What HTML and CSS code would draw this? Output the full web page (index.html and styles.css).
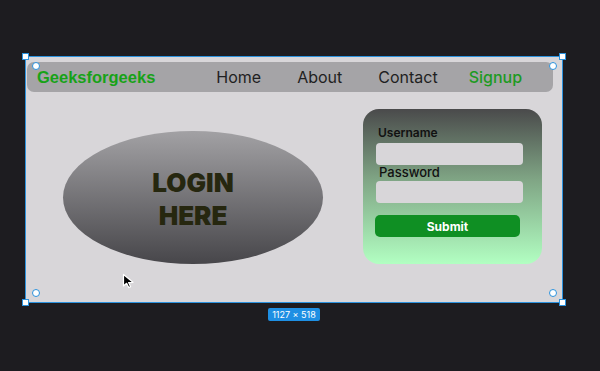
FILE: index.html
```html
<!DOCTYPE html>
<html>
<head>
<meta charset="utf-8">
<link rel="stylesheet" href="styles.css">
</head>
<body>
<div class="stage">
  <div class="frame">
    <nav class="nav">
      <div class="logo">Geeksforgeeks</div>
      <div class="links">
        <a class="link">Home</a>
        <a class="link">About</a>
        <a class="link contact">Contact</a>
        <a class="link signup">Signup</a>
      </div>
    </nav>
    <main class="main">
      <div class="oval">
        <div class="oval-text">LOGIN<br>HERE</div>
      </div>
      <form class="card">
        <label class="lbl lbl-user">Username</label>
        <div class="input"></div>
        <label class="lbl lbl-pass">Password</label>
        <div class="input"></div>
        <div class="submit">Submit</div>
      </form>
    </main>
    <span class="handle sq tl"></span>
    <span class="handle sq tr"></span>
    <span class="handle sq bl"></span>
    <span class="handle sq br"></span>
    <span class="handle ci tl"></span>
    <span class="handle ci tr"></span>
    <span class="handle ci bl"></span>
    <span class="handle ci br"></span>
    <svg class="cursor" width="14" height="16" viewBox="0 0 14 16">
      <path d="M1.5 1.5 L1.5 13 L4.6 10.3 L6.7 14.6 L8.6 13.7 L6.6 9.6 L11 9.3 Z" fill="#000" stroke="#fff" stroke-width="1.2" stroke-linejoin="round"/>
    </svg>
  </div>
  <div class="size-row"><span class="size">1127 × 518</span></div>
</div>
</body>
</html>
```
FILE: styles.css
```css
html, body {
  margin: 0;
  padding: 0;
}
body {
  background: #1d1c20;
  width: 600px;
  height: 371px;
  overflow: hidden;
  font-family: Inter, "Noto Sans", sans-serif;
}
.stage {
  padding-top: 56px;
  padding-left: 25px;
}
.frame {
  position: relative;
  box-sizing: border-box;
  width: 538px;
  height: 247px;
  border: 1px solid #2c92dd;
  background: #d8d6d9;
  padding: 5px 9px 0 1px;
}
.nav {
  height: 30px;
  background: #a5a4a7;
  border-radius: 7px;
  display: flex;
  align-items: center;
  padding-left: 10px;
}
.logo {
  font-family: "Liberation Sans", Arial, sans-serif;
  font-weight: 700;
  font-size: 16.5px;
  color: #17a217;
}
.links {
  display: flex;
  margin-left: 61px;
}
.link {
  font-size: 16px;
  color: #1f1f22;
  margin-right: 36px;
  font-weight: 400;
}
.link.contact {
  margin-right: 31px;
}
.link.signup {
  color: #1d9a22;
  font-weight: 500;
  margin-right: 0;
}
.main {
  display: flex;
  align-items: flex-start;
  padding-left: 36px;
}
.oval {
  margin-top: 39px;
  width: 260px;
  height: 133px;
  border-radius: 50%;
  background: linear-gradient(to bottom, #a2a1a4, #47464a);
  display: flex;
  align-items: center;
  justify-content: center;
}
.oval-text {
  font-size: 26px;
  font-weight: 900;
  line-height: 33px;
  text-align: center;
  color: #26270f;
  margin-top: 2px;
}
.card {
  margin: 17px 0 0 40px;
  box-sizing: border-box;
  width: 179px;
  height: 155px;
  border-radius: 16px;
  background: linear-gradient(to bottom, #4a4a4b 0%, #7fa484 45%, #b2ffc2 100%);
  padding: 16px 19px 0 13px;
  display: flex;
  flex-direction: column;
}
.lbl {
  font-size: 12px;
  color: #111;
  line-height: 15px;
}
.lbl-user {
  font-weight: 600;
  padding-left: 2px;
}
.lbl-pass {
  font-size: 13px;
  font-weight: 500;
  padding-left: 3px;
  line-height: 13px;
  margin-top: 1px;
}
.input {
  height: 22px;
  background: #d8d6d9;
  border-radius: 4px;
  margin-top: 3px;
}
.lbl-pass + .input {
  margin-top: 2px;
}
.submit {
  margin-top: 12px;
  margin-left: -1px;
  margin-right: 3px;
  height: 22px;
  background: #0f8f23;
  border-radius: 5px;
  color: #fff;
  font-size: 12px;
  font-weight: 700;
  display: flex;
  align-items: center;
  justify-content: center;
}
.handle {
  position: absolute;
  box-sizing: border-box;
}
.handle.sq {
  width: 7px;
  height: 7px;
  background: #fff;
  border: 1px solid #2c92dd;
}
.sq.tl { left: -4px; top: -4px; }
.sq.tr { right: -4px; top: -4px; }
.sq.bl { left: -4px; bottom: -4px; }
.sq.br { right: -4px; bottom: -4px; }
.handle.ci {
  width: 8px;
  height: 8px;
  border-radius: 50%;
  background: #fff;
  border: 1.5px solid #2c92dd;
}
.ci.tl { left: 6px; top: 5px; }
.ci.tr { right: 5px; top: 5px; }
.ci.bl { left: 6px; bottom: 5px; }
.ci.br { right: 5px; bottom: 5px; }
.cursor {
  position: absolute;
  left: 96px;
  top: 216px;
}
.size-row {
  width: 538px;
  display: flex;
  justify-content: center;
  margin-top: 5px;
}
.size {
  background: #1e8fe3;
  color: #fff;
  font-size: 9px;
  line-height: 13px;
  padding: 0 4px;
  border-radius: 2px;
}
```
